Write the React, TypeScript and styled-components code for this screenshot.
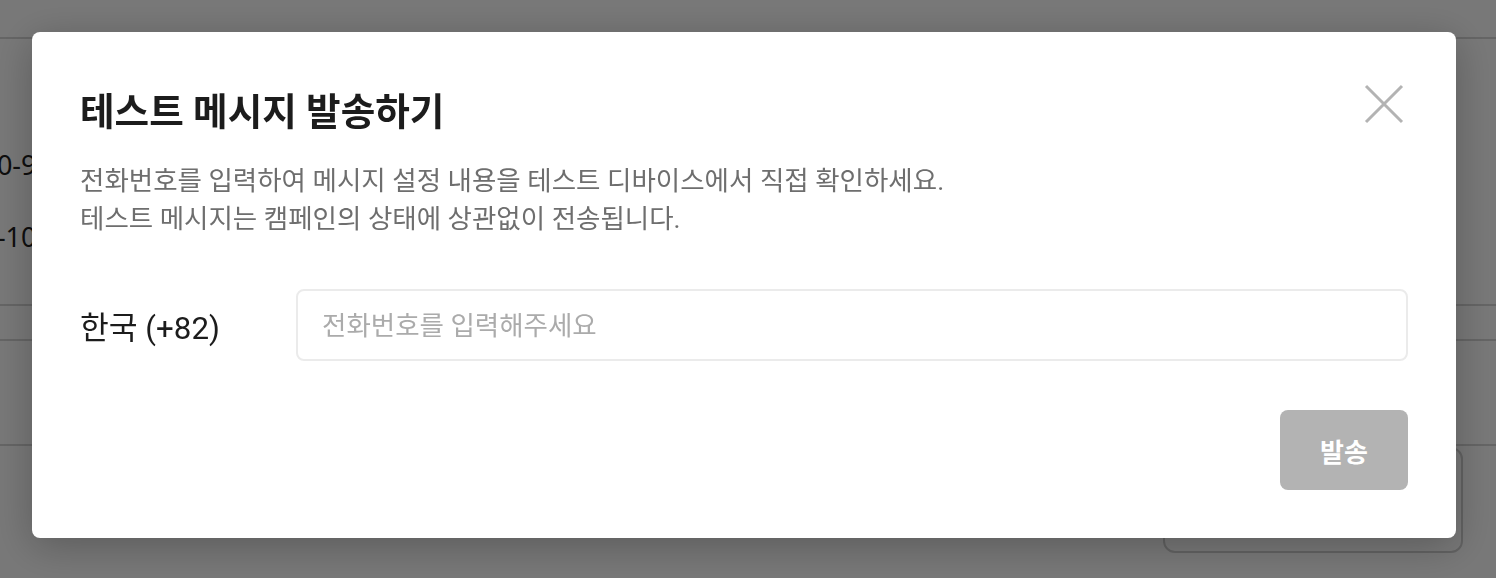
import React from "react";
import styled, { createGlobalStyle } from "styled-components";

const GlobalStyle = createGlobalStyle`
  html, body {
    margin: 0;
    padding: 0;
    overflow: hidden;
    background: #ffffff;
  }
  * { box-sizing: border-box; }
  body {
    font-family: "Roboto", "Noto Sans CJK KR", sans-serif;
  }
`;

/* ---------- page behind the dialog ---------- */
const Page = styled.div`
  width: 1496px;
  height: 578px;
  background: #ffffff;
  display: flex;
  flex-direction: column;
`;

const TopBar = styled.div`
  height: 39px;
  border-bottom: 2px solid #d6d6d6;
  flex: none;
`;

const InfoList = styled.div`
  display: flex;
  flex-direction: column;
  gap: 44px;
  padding: 112px 0 0 0;
  height: 265px;
  margin-left: -34px;
  flex: none;
`;

const InfoText = styled.div`
  font-family: "Noto Sans", sans-serif;
  font-size: 27px;
  line-height: 28px;
  color: #1e1e1e;
  white-space: nowrap;
`;

const Divider = styled.div<{ $gap: number }>`
  height: 2px;
  background: #d6d6d6;
  margin-top: ${(p) => p.$gap}px;
  flex: none;
`;

const BottomArea = styled.div`
  display: flex;
  justify-content: flex-end;
  padding-right: 33px;
  margin-top: 1px;
`;

const BehindCard = styled.div`
  width: 300px;
  height: 106px;
  border: 2px solid #d0d0d0;
  border-radius: 12px;
`;

/* ---------- overlay + dialog ---------- */
const Overlay = styled.div`
  position: fixed;
  inset: 0;
  background: rgba(0, 0, 0, 0.53);
  display: flex;
  justify-content: flex-start;
  align-items: flex-start;
  padding: 32px 0 0 32px;
`;

const Dialog = styled.div`
  width: 1424px;
  background: #ffffff;
  border-radius: 8px;
  padding: 48px;
  display: flex;
  flex-direction: column;
  box-shadow: 0 8px 40px rgba(0, 0, 0, 0.25);
`;

const Header = styled.div`
  display: flex;
  align-items: flex-start;
  justify-content: space-between;
`;

const Title = styled.h2`
  margin: 0;
  font-size: 37.6px;
  line-height: 64px;
  font-weight: 700;
  color: #1c1c1c;
`;

const CloseButton = styled.button`
  width: 48px;
  height: 48px;
  padding: 0;
  border: none;
  background: transparent;
  display: flex;
  align-items: center;
  justify-content: center;
  cursor: pointer;
`;

const Description = styled.p`
  margin: 18px 0 0 0;
  font-size: 26.5px;
  line-height: 38px;
  color: #6e6e6e;
`;

const PhoneRow = styled.div`
  margin-top: 51px;
  display: flex;
  align-items: center;
`;

const CountryLabel = styled.div`
  width: 216px;
  flex: none;
  font-size: 31.3px;
  color: #1c1c1c;
`;

const PhoneInput = styled.input`
  flex: 1;
  min-width: 0;
  height: 72px;
  border: 2px solid #ebebeb;
  border-radius: 8px;
  padding: 0 24px;
  font-family: "Roboto", "Noto Sans CJK KR", sans-serif;
  font-size: 26.5px;
  color: #1c1c1c;
  outline: none;
  &::placeholder {
    color: #ababab;
  }
`;

const Footer = styled.div`
  margin-top: 49px;
  display: flex;
  justify-content: flex-end;
`;

const SendButton = styled.button`
  width: 128px;
  height: 80px;
  border: none;
  border-radius: 8px;
  background: #b3b3b3;
  color: #ffffff;
  font-family: "Roboto", "Noto Sans CJK KR", sans-serif;
  font-size: 26px;
  font-weight: 700;
  cursor: default;
`;

const CloseIcon = () => (
  <svg width="48" height="48" viewBox="0 0 48 48" aria-hidden="true">
    <path
      d="M6 6 L42 42 M42 6 L6 42"
      stroke="#b3b3b3"
      strokeWidth="3"
      strokeLinecap="butt"
      fill="none"
    />
  </svg>
);

export default function App() {
  return (
    <>
      <GlobalStyle />
      <Page>
        <TopBar />
        <InfoList>
          <InfoText>010-9876-5432</InfoText>
          <InfoText>82-10-1234-5678</InfoText>
        </InfoList>
        <Divider $gap={0} />
        <Divider $gap={33} />
        <Divider $gap={103} />
        <BottomArea>
          <BehindCard />
        </BottomArea>
      </Page>
      <Overlay>
        <Dialog role="dialog" aria-modal="true">
          <Header>
            <Title>테스트 메시지 발송하기</Title>
            <CloseButton aria-label="닫기">
              <CloseIcon />
            </CloseButton>
          </Header>
          <Description>
            전화번호를 입력하여 메시지 설정 내용을 테스트 디바이스에서 직접 확인하세요.
            <br />
            테스트 메시지는 캠페인의 상태에 상관없이 전송됩니다.
          </Description>
          <PhoneRow>
            <CountryLabel>한국 (+82)</CountryLabel>
            <PhoneInput placeholder="전화번호를 입력해주세요" />
          </PhoneRow>
          <Footer>
            <SendButton>발송</SendButton>
          </Footer>
        </Dialog>
      </Overlay>
    </>
  );
}
